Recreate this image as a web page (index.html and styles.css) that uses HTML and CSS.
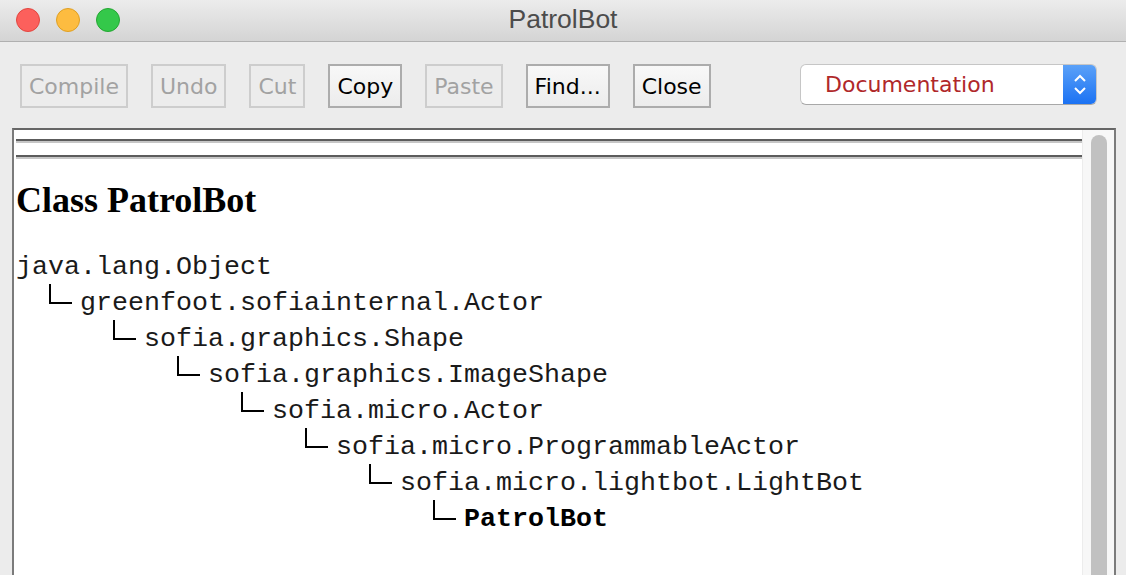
FILE: index.html
```html
<!DOCTYPE html>
<html>
<head>
<meta charset="utf-8">
<title>PatrolBot</title>
<link rel="stylesheet" href="styles.css">
</head>
<body>
<div class="window">
  <header class="titlebar">
    <div class="lights">
      <span class="light red"></span>
      <span class="light yellow"></span>
      <span class="light green"></span>
    </div>
    <div class="title">PatrolBot</div>
    <div></div>
  </header>
  <div class="toolbar">
    <div class="buttons">
      <button class="btn disabled">Compile</button>
      <button class="btn disabled">Undo</button>
      <button class="btn disabled">Cut</button>
      <button class="btn">Copy</button>
      <button class="btn disabled">Paste</button>
      <button class="btn">Find...</button>
      <button class="btn">Close</button>
    </div>
    <div class="select">
      <span class="select-label">Documentation</span>
      <span class="select-arrows">
        <svg width="14" height="22" viewBox="0 0 14 22"><path d="M2 7 L7 2 L12 7" fill="none" stroke="#fff" stroke-width="2"/><path d="M2 14 L7 19 L12 14" fill="none" stroke="#fff" stroke-width="2"/></svg>
      </span>
    </div>
  </div>
  <div class="panel">
    <div class="doc">
      <hr class="rule">
      <hr class="rule">
      <h2 class="classname">Class PatrolBot</h2>
      <div class="tree">
        <div class="row">java.lang.Object</div>
        <div class="sub">
          <div class="row"><span class="corner"></span>greenfoot.sofiainternal.Actor</div>
          <div class="sub">
            <div class="row"><span class="corner"></span>sofia.graphics.Shape</div>
            <div class="sub">
              <div class="row"><span class="corner"></span>sofia.graphics.ImageShape</div>
              <div class="sub">
                <div class="row"><span class="corner"></span>sofia.micro.Actor</div>
                <div class="sub">
                  <div class="row"><span class="corner"></span>sofia.micro.ProgrammableActor</div>
                  <div class="sub">
                    <div class="row"><span class="corner"></span>sofia.micro.lightbot.LightBot</div>
                    <div class="sub">
                      <div class="row"><span class="corner"></span><b>PatrolBot</b></div>
                    </div>
                  </div>
                </div>
              </div>
            </div>
          </div>
        </div>
      </div>
    </div>
    <div class="scrolltrack"><div class="thumb"></div></div>
  </div>
</div>
</body>
</html>
```

FILE: styles.css
```css
* { box-sizing: border-box; }
html, body {
  margin: 0;
  padding: 0;
  width: 1126px;
  height: 575px;
  overflow: hidden;
  background: #ececec;
}
.window {
  display: flex;
  flex-direction: column;
  height: 575px;
  font-family: "DejaVu Sans", "Liberation Sans", sans-serif;
}
.titlebar {
  height: 42px;
  flex: none;
  display: grid;
  grid-template-columns: 1fr auto 1fr;
  align-items: center;
  background: linear-gradient(#ececec, #d4d4d4);
  border-bottom: 1px solid #b0b0b0;
}
.lights {
  display: flex;
  gap: 16px;
  padding-left: 16px;
  margin-top: -1px;
}
.light {
  width: 24px;
  height: 24px;
  border-radius: 50%;
  display: block;
}
.red { background: #fc605c; border: 1px solid #e2463f; }
.yellow { background: #fdbc40; border: 1px solid #dfa023; }
.green { background: #34c84a; border: 1px solid #24a732; }
.title {
  font-family: "Liberation Sans", Arial, sans-serif;
  font-size: 26.5px;
  color: #4c4c4c;
  margin-top: -2px;
}
.toolbar {
  height: 86px;
  flex: none;
  display: flex;
  align-items: flex-start;
  padding: 22px 0 0 20px;
  background: #ececec;
}
.buttons {
  display: flex;
  gap: 23px;
}
.btn {
  height: 44px;
  padding: 0 7px;
  font-family: "DejaVu Sans", sans-serif;
  font-size: 22px;
  color: #000;
  background: linear-gradient(#f8f8f8, #ececec);
  border: 2px solid #acacac;
  border-radius: 0;
}
.btn.disabled {
  color: #a2a2a2;
  background: #ececec;
  border-color: #cdcdcd;
}
.select {
  margin-left: auto;
  margin-right: 29px;
  width: 297px;
  height: 41px;
  display: flex;
  align-items: stretch;
  background: #fff;
  border: 1px solid #c6c6c6;
  border-bottom-color: #a8a8a8;
  border-radius: 6px;
  overflow: hidden;
}
.select-label {
  flex: 1;
  display: flex;
  align-items: center;
  padding-left: 24px;
  font-size: 22px;
  color: #b0282a;
}
.select-arrows {
  width: 33px;
  display: flex;
  align-items: center;
  justify-content: center;
  background: linear-gradient(#5ba1f8, #1b72f3);
}
.panel {
  flex: 1;
  display: flex;
  margin: 0 10px 0 12px;
  border: 2px solid #7b7b7b;
  border-top-color: #666;
  border-bottom: none;
  background: #fff;
}
.doc {
  flex: 1;
  padding: 9px 0 0 2px;
  background: #fff;
}
.rule {
  margin: 0 0 12px 0;
  height: 0;
  border: none;
  border-top: 2px solid #5c5c5c;
  border-bottom: 2px solid #c6c6c6;
}
.classname {
  margin: 21px 0 29px 0;
  font-family: "Liberation Serif", "Times New Roman", serif;
  font-weight: bold;
  font-size: 36px;
  line-height: 40px;
  color: #000;
}
.tree {
  font-family: "Liberation Mono", "Courier New", monospace;
  font-size: 26.67px;
  line-height: 36px;
  color: #1a1a1a;
  padding-left: 0;
}
.sub {
  padding-left: 64px;
}
.row {
  display: flex;
  align-items: flex-start;
  white-space: pre;
  height: 36px;
}
.sub > .row {
  margin-left: -31px;
}
.corner {
  flex: none;
  width: 23px;
  height: 20px;
  margin-top: -1px;
  margin-right: 8px;
  border-left: 2px solid #000;
  border-bottom: 2px solid #000;
}
.row b {
  font-weight: bold;
  color: #000;
}
.scrolltrack {
  flex: none;
  width: 32px;
  padding: 5px 7px 0 8px;
  background: #f7f7f7;
  border-left: 1px solid #ececec;
}
.thumb {
  height: 100%;
  background: #c1c1c1;
  border-radius: 8px 8px 0 0;
}
```
